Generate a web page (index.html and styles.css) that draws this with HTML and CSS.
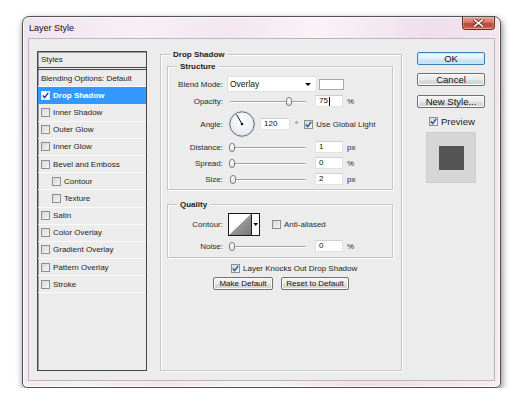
FILE: index.html
```html
<!DOCTYPE html>
<html>
  <head>
    <title>Layer Style</title>
    <link rel="stylesheet" href="styles.css">
  </head>
  <body>
    <div class="window">
      <div class="titlebar">
        <span class="title">Layer Style</span>
        <div class="close-btn">
          <svg width="11" height="8" viewBox="0 0 11 8">
            <path d="M1.5 0.8 L9.5 7.2 M9.5 0.8 L1.5 7.2" stroke="#5a1d17" stroke-width="3.2" stroke-linecap="square"/>
            <path d="M1.5 0.8 L9.5 7.2 M9.5 0.8 L1.5 7.2" stroke="#fff" stroke-width="1.6" stroke-linecap="square"/>
          </svg>
        </div>
      </div>

      <div class="client">
        <!-- effects list -->
        <div class="styles-panel">
          <div class="panel-head">Styles</div>
          <div class="style-row">Blending Options: Default</div>
          <div class="style-row selected"><span class="check on"><svg width="7" height="7" viewBox="0 0 7 7"><path d="M0.8 3.4 L2.7 5.6 L6.2 0.9" fill="none" stroke="#1f3f8f" stroke-width="1.5"/></svg></span>Drop Shadow</div>
          <div class="style-row"><span class="check"></span>Inner Shadow</div>
          <div class="style-row"><span class="check"></span>Outer Glow</div>
          <div class="style-row"><span class="check"></span>Inner Glow</div>
          <div class="style-row"><span class="check"></span>Bevel and Emboss</div>
          <div class="style-row sub"><span class="check"></span>Contour</div>
          <div class="style-row sub"><span class="check"></span>Texture</div>
          <div class="style-row"><span class="check"></span>Satin</div>
          <div class="style-row"><span class="check"></span>Color Overlay</div>
          <div class="style-row"><span class="check"></span>Gradient Overlay</div>
          <div class="style-row"><span class="check"></span>Pattern Overlay</div>
          <div class="style-row"><span class="check"></span>Stroke</div>
        </div>

        <!-- drop shadow settings -->
        <fieldset class="group main-group">
          <legend>Drop Shadow</legend>

          <fieldset class="group sub-group structure">
            <legend>Structure</legend>

            <div class="row row-blend">
              <span class="label">Blend Mode:</span>
              <div class="select">
                <span>Overlay</span>
                <span class="arrow"></span>
              </div>
              <div class="swatch"></div>
            </div>

            <div class="row">
              <span class="label">Opacity:</span>
              <div class="slider"><span class="thumb" style="left: calc(75% + 2px)"></span></div>
              <div class="field">75<span class="caret"></span></div>
              <span class="unit">%</span>
            </div>

            <div class="row row-angle">
              <span class="label">Angle:</span>
              <svg class="dial" width="28" height="28" viewBox="0 0 28 28">
                <defs>
                  <radialGradient id="dialFill" cx="50%" cy="40%" r="60%">
                    <stop offset="0" stop-color="#ffffff"/>
                    <stop offset="1" stop-color="#e2e6ec"/>
                  </radialGradient>
                </defs>
                <circle cx="14" cy="14" r="13.2" fill="url(#dialFill)" stroke="#d3d9e0" stroke-width="0.8"/>
                <circle cx="14" cy="14" r="12.2" fill="none" stroke="#5f6e84" stroke-width="1"/>
                <line x1="14" y1="14" x2="8.6" y2="4.6" stroke="#111" stroke-width="1"/>
                <circle cx="14" cy="14" r="1.3" fill="#111"/>
              </svg>
              <div class="field field-angle">120</div>
              <span class="degree">&deg;</span>
              <span class="check on"><svg width="7" height="7" viewBox="0 0 7 7"><path d="M0.8 3.4 L2.7 5.6 L6.2 0.9" fill="none" stroke="#2b52a8" stroke-width="1.5"/></svg></span>
              <span class="check-label">Use Global Light</span>
            </div>

            <div class="row">
              <span class="label">Distance:</span>
              <div class="slider"><span class="thumb" style="left: calc(0.4% + 2px)"></span></div>
              <div class="field">1</div>
              <span class="unit">px</span>
            </div>

            <div class="row row-loose">
              <span class="label">Spread:</span>
              <div class="slider"><span class="thumb" style="left: calc(0% + 2px)"></span></div>
              <div class="field">0</div>
              <span class="unit">%</span>
            </div>

            <div class="row row-loose">
              <span class="label">Size:</span>
              <div class="slider"><span class="thumb" style="left: calc(0.8% + 2px)"></span></div>
              <div class="field">2</div>
              <span class="unit">px</span>
            </div>
          </fieldset>

          <fieldset class="group sub-group quality">
            <legend>Quality</legend>

            <div class="row row-contour">
              <span class="label">Contour:</span>
              <svg class="contour" width="32" height="23" viewBox="0 0 32 23">
                <defs>
                  <linearGradient id="contourFill" x1="0" y1="0" x2="1" y2="1">
                    <stop offset="0" stop-color="#b8b8b8"/>
                    <stop offset="1" stop-color="#767676"/>
                  </linearGradient>
                </defs>
                <rect x="0.5" y="0.5" width="31" height="22" fill="#fff" stroke="#1a1a1a"/>
                <polygon points="1,22 23,1 23,22" fill="url(#contourFill)"/>
                <line x1="23.5" y1="0.5" x2="23.5" y2="22.5" stroke="#1a1a1a"/>
                <polygon points="25.4,10 30,10 27.7,13" fill="#000"/>
              </svg>
              <span class="check"></span>
              <span class="check-label">Anti-aliased</span>
            </div>

            <div class="row row-noise">
              <span class="label">Noise:</span>
              <div class="slider"><span class="thumb" style="left: calc(0% + 2px)"></span></div>
              <div class="field">0</div>
              <span class="unit">%</span>
            </div>
          </fieldset>

          <div class="knockout">
            <span class="check on"><svg width="7" height="7" viewBox="0 0 7 7"><path d="M0.8 3.4 L2.7 5.6 L6.2 0.9" fill="none" stroke="#2b52a8" stroke-width="1.5"/></svg></span>
            <span class="check-label">Layer Knocks Out Drop Shadow</span>
          </div>

          <div class="defaults">
            <button class="btn btn-make">Make Default</button>
            <button class="btn btn-reset">Reset to Default</button>
          </div>
        </fieldset>

        <!-- dialog buttons + preview -->
        <div class="side">
          <button class="btn side-btn btn-ok">OK</button>
          <button class="btn side-btn btn-cancel">Cancel</button>
          <button class="btn side-btn btn-new">New Style...</button>
          <div class="preview-toggle">
            <span class="check on"><svg width="7" height="7" viewBox="0 0 7 7"><path d="M0.8 3.4 L2.7 5.6 L6.2 0.9" fill="none" stroke="#2b52a8" stroke-width="1.5"/></svg></span>
            <span>Preview</span>
          </div>
          <div class="preview-box">
            <div class="preview-swatch"></div>
          </div>
        </div>
      </div>
    </div>
  </body>
</html>
```

FILE: styles.css
```css
body {
  margin: 0;
  padding: 16px 0 0 22px;
  background-color: #fff;
  font-family: "Liberation Sans", Arial, sans-serif;
  font-size: 8px;
  color: #1c1c1c;
}

/* window frame */
.window {
  width: 479px;
  height: 372px;
  box-sizing: border-box;
  border: 1px solid #525252;
  border-radius: 7px 7px 5px 5px;
  background: linear-gradient(100deg, #f1e3ee 0%, #f8eff6 22%, #f3e6f0 38%, #faf3f8 55%, #efdfeb 75%, #f6ecf4 100%);
  box-shadow: 1px 3px 7px rgba(0, 0, 0, 0.5), inset 0 0 0 1px rgba(255, 255, 255, 0.7);
  display: flex;
  flex-direction: column;
}

.titlebar {
  height: 21px;
  flex-shrink: 0;
  display: flex;
  justify-content: space-between;
  padding: 0 5px 0 6px;
}

.title {
  align-self: center;
  font-size: 9px;
  color: #111;
  padding-top: 1px;
}

.close-btn {
  width: 33px;
  height: 13px;
  box-sizing: border-box;
  border: 1px solid #6e2a24;
  border-top: none;
  border-radius: 0 0 4px 4px;
  background: linear-gradient(#e3a59c 0%, #d27466 45%, #c0493a 55%, #c8553f 85%, #dc8a6c 100%);
  box-shadow: inset 0 0 0 1px rgba(255, 220, 210, 0.35);
  display: flex;
  align-items: center;
  justify-content: center;
}

.client {
  flex: 1;
  margin: 0 5px 6px;
  border: 1px solid #bfb4bd;
  background-color: #ececec;
  display: flex;
  padding: 12px 9px 9px 8px;
}

/* styles list */
.styles-panel {
  width: 110px;
  box-sizing: border-box;
  flex-shrink: 0;
  border: 1px solid #474747;
  box-shadow: inset 1px 1px 0 #9a9a9a;
  display: flex;
  flex-direction: column;
}

.panel-head {
  height: 15px;
  line-height: 15px;
  padding-left: 3px;
  border-bottom: 3px double #474747;
}

.style-row {
  height: 17.2px;
  box-sizing: border-box;
  border-bottom: 1px solid #fafafa;
  display: flex;
  align-items: center;
  gap: 3px;
  padding-left: 3px;
}

.style-row.sub {
  padding-left: 14px;
}

.style-row.selected {
  background-color: #3399ff;
  color: #fff;
  font-weight: bold;
  border-bottom-color: #3399ff;
}

.style-row.selected .check {
  background: #fff;
  border-color: #d4e6fa;
}

/* checkboxes */
.check {
  width: 9px;
  height: 9px;
  box-sizing: border-box;
  flex-shrink: 0;
  border: 1px solid #8e8e8e;
  background: linear-gradient(135deg, #d6d6d6, #f6f6f6);
  display: flex;
  align-items: center;
  justify-content: center;
}

.check-label {
  margin-left: 3px;
}

/* group boxes */
.group {
  margin: 0;
  padding: 0;
  min-width: 0;
  border: 1px solid #c5c5c5;
  box-shadow: inset 1px 1px 0 #fff, 1px 1px 0 #fff;
}

.group > legend {
  padding: 0 3px;
  margin-left: 3px;
  font-weight: bold;
  line-height: 11px;
  background-color: #ececec;
}

.main-group {
  width: 242px;
  box-sizing: border-box;
  flex-shrink: 0;
  margin: -2px 0 0 13px;
  padding: 1px 8px 0 6px;
}

.sub-group > legend {
  margin-left: 9px;
}

.structure {
  padding: 4px 0 4px 0;
}

.quality {
  margin-top: 9px;
  padding: 3px 0 5px 0;
}

.row {
  display: flex;
  align-items: center;
  height: 12px;
  margin-top: 3px;
  color: #2a2a2a;
}

.row-blend {
  height: 16px;
  margin-top: 0;
}

.row-angle {
  height: 28px;
}

.row-loose {
  margin-top: 4px;
}

.row-contour {
  height: 23px;
  margin-top: 0;
}

.row-noise {
  margin-top: 4px;
}

.label {
  width: 55px;
  text-align: right;
  flex-shrink: 0;
}

.select {
  width: 90px;
  height: 16px;
  box-sizing: border-box;
  margin-left: 4px;
  background-color: #fff;
  border: 1px solid #e0e0e0;
  display: flex;
  align-items: center;
  justify-content: space-between;
  padding: 0 5px 0 2px;
  font-size: 8.5px;
  color: #111;
}

.arrow {
  width: 0;
  height: 0;
  border-left: 3px solid transparent;
  border-right: 3px solid transparent;
  border-top: 3px solid #000;
}

.swatch {
  width: 25px;
  height: 11px;
  box-sizing: border-box;
  margin-left: 2px;
  background-color: #fff;
  border: 1px solid #a8a8a8;
}

.slider {
  position: relative;
  width: 76px;
  height: 12px;
  margin-left: 7px;
  flex-shrink: 0;
}

.slider::before {
  content: "";
  position: absolute;
  left: 0;
  right: 0;
  top: 6px;
  height: 1px;
  background-color: #a3a3a3;
  box-shadow: 0 1px 0 #fff;
}

.thumb {
  position: absolute;
  top: 2px;
  width: 6px;
  height: 9px;
  box-sizing: border-box;
  transform: translateX(-50%);
  border: 1px solid #7c7c7c;
  border-radius: 3px;
  background: linear-gradient(#fff, #e2e2e2);
}

.field {
  width: 28px;
  height: 12px;
  box-sizing: border-box;
  margin-left: 9px;
  background-color: #fff;
  border: 1px solid #e2e2e2;
  border-top-color: #cfcfcf;
  padding-left: 3px;
  line-height: 10px;
  color: #111;
  display: flex;
  align-items: center;
}

.caret {
  width: 1px;
  height: 9px;
  background-color: #000;
  margin-left: 1px;
}

.unit {
  margin-left: 4px;
}

.dial {
  margin-left: 5px;
  flex-shrink: 0;
}

.field-angle {
  width: 30px;
  margin-left: 4px;
}

.degree {
  margin-left: 5px;
  margin-right: 6px;
}

.contour {
  margin-left: 5px;
  margin-right: 12px;
  flex-shrink: 0;
}

.knockout {
  display: flex;
  align-items: center;
  height: 10px;
  margin: 5px 0 0 64px;
}

.defaults {
  display: flex;
  gap: 8px;
  margin: 4px 0 0 46px;
}

/* buttons */
.btn {
  height: 13px;
  box-sizing: border-box;
  padding: 0;
  font-family: "Liberation Sans", Arial, sans-serif;
  font-size: 8px;
  color: #111;
  border: 1px solid #707070;
  border-radius: 2px;
  background: linear-gradient(#f4f4f4 0%, #ebebeb 50%, #dedede 51%, #d0d0d0 100%);
  box-shadow: inset 0 0 0 1px #fbfbfb;
}

.btn-make {
  width: 60px;
}

.btn-reset {
  width: 68px;
}

.side {
  width: 68px;
  flex-shrink: 0;
  margin-left: 15px;
  display: flex;
  flex-direction: column;
  align-items: flex-start;
}

.side-btn {
  width: 68px;
  font-size: 9.5px;
  line-height: 11px;
}

.btn-ok {
  margin-top: 1px;
  border-color: #3c7fb1;
  background: linear-gradient(#f2f9fd 0%, #e3f1fb 50%, #cfe7f7 51%, #bddff4 100%);
  box-shadow: inset 0 0 0 1px #c9ecfc;
}

.btn-cancel {
  margin-top: 8px;
}

.btn-new {
  margin-top: 9px;
}

.preview-toggle {
  display: flex;
  align-items: center;
  gap: 3px;
  height: 10px;
  margin: 8px 0 0 12px;
  font-size: 9.5px;
}

.preview-box {
  width: 50px;
  height: 51px;
  box-sizing: border-box;
  margin: 6px 0 0 9px;
  background-color: #d6d6d6;
  border: 1px solid #cdcdcd;
  display: flex;
  align-items: center;
  justify-content: center;
}

.preview-swatch {
  width: 25px;
  height: 24px;
  background-color: #555;
}
```
